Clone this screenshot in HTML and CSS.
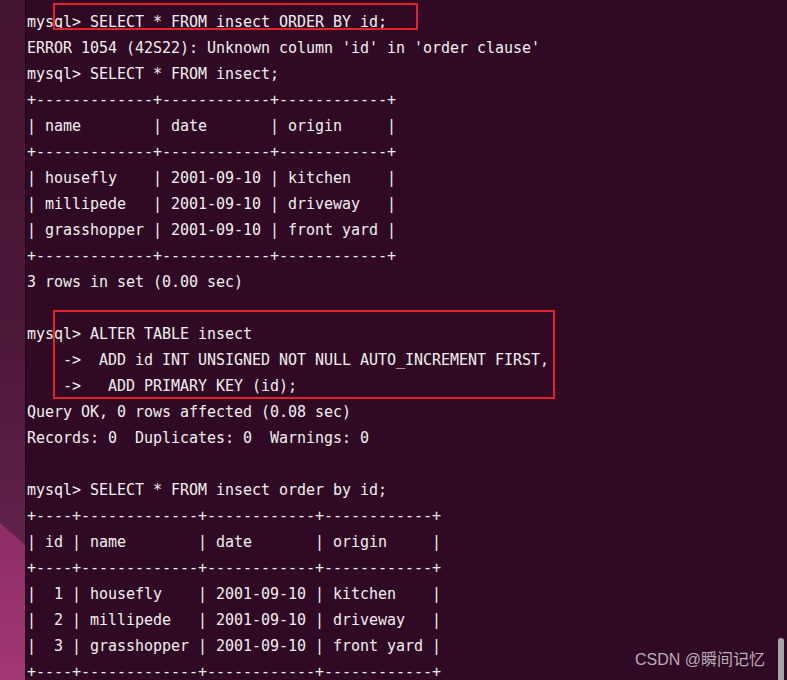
FILE: index.html
```html
<!DOCTYPE html>
<html>
<head>
<meta charset="utf-8">
<link rel="stylesheet" href="styles.css">
</head>
<body>
<div class="screen">
  <div class="wallpaper"></div>
  <div class="terminal">
<pre class="output">mysql&gt; SELECT * FROM insect ORDER BY id;
ERROR 1054 (42S22): Unknown column 'id' in 'order clause'
mysql&gt; SELECT * FROM insect;
+-------------+------------+------------+
| name        | date       | origin     |
+-------------+------------+------------+
| housefly    | 2001-09-10 | kitchen    |
| millipede   | 2001-09-10 | driveway   |
| grasshopper | 2001-09-10 | front yard |
+-------------+------------+------------+
3 rows in set (0.00 sec)

mysql&gt; ALTER TABLE insect
    -&gt;  ADD id INT UNSIGNED NOT NULL AUTO_INCREMENT FIRST,
    -&gt;   ADD PRIMARY KEY (id);
Query OK, 0 rows affected (0.08 sec)
Records: 0  Duplicates: 0  Warnings: 0

mysql&gt; SELECT * FROM insect order by id;
+----+-------------+------------+------------+
| id | name        | date       | origin     |
+----+-------------+------------+------------+
|  1 | housefly    | 2001-09-10 | kitchen    |
|  2 | millipede   | 2001-09-10 | driveway   |
|  3 | grasshopper | 2001-09-10 | front yard |
+----+-------------+------------+------------+</pre>
    <div class="mark mark-one"></div>
    <div class="mark mark-two"></div>
    <div class="watermark">CSDN @瞬间记忆</div>
    <div class="scrollbar"></div>
  </div>
</div>
</body>
</html>
```
FILE: styles.css
```css
html, body {
  margin: 0;
  padding: 0;
  width: 787px;
  height: 680px;
  overflow: hidden;
  background: #300a24;
}

.screen {
  display: flex;
  width: 787px;
  height: 680px;
}

.wallpaper {
  position: relative;
  width: 25px;
  flex: none;
  background: linear-gradient(to bottom, #451432 0%, #4e1839 50%, #5e2149 75%, #5e2149 100%);
  border-right: 1px solid #1c0614;
  overflow: hidden;
}

.wallpaper::after {
  content: "";
  position: absolute;
  left: 0;
  top: 0;
  width: 25px;
  height: 680px;
  background: linear-gradient(to bottom, #8c2d66 520px, #a23775 680px);
  clip-path: polygon(0 523px, 25px 545px, 25px 680px, 0 680px);
}

.terminal {
  position: relative;
  flex: 1;
  background: #300a24;
  padding: 9px 0 0 1px;
}

.output {
  margin: 0;
  font-family: "DejaVu Sans Mono", "Liberation Mono", monospace;
  font-size: 15px;
  letter-spacing: -0.03px;
  line-height: 26px;
  color: #f0eff0;
  white-space: pre;
}

.mark {
  position: absolute;
  border: 2px solid #e3212b;
  box-sizing: border-box;
}

.mark-one {
  left: 27px;
  top: 3px;
  width: 365px;
  height: 27px;
}

.mark-two {
  left: 27px;
  top: 310px;
  width: 502px;
  height: 89px;
}

.watermark {
  position: absolute;
  left: 609px;
  top: 650px;
  font-family: "Liberation Sans", "Noto Sans CJK SC", sans-serif;
  font-size: 16px;
  line-height: 20px;
  color: rgba(225, 220, 225, 0.78);
  white-space: nowrap;
}

.scrollbar {
  position: absolute;
  left: 752px;
  top: 638px;
  width: 6px;
  height: 48px;
  border-radius: 3px;
  background: #a7a5a7;
}
```
